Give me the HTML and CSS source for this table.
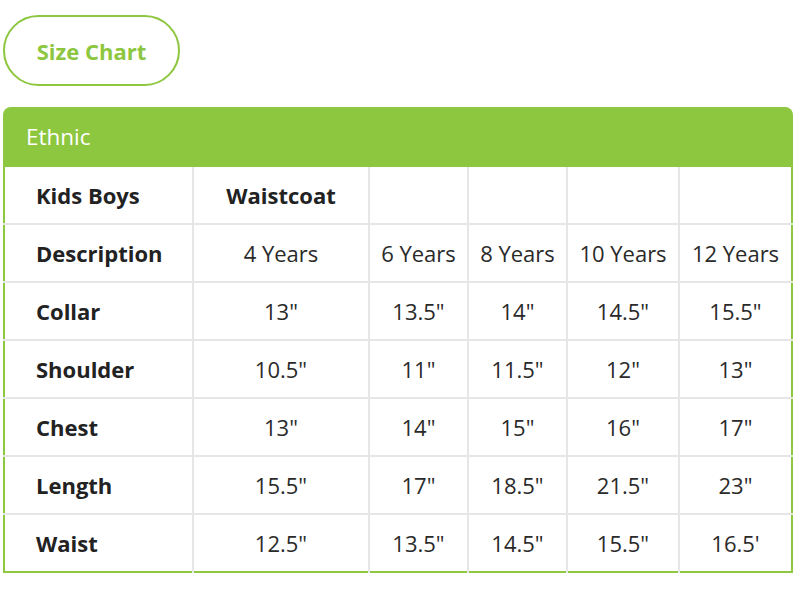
FILE: index.html
```html
<!DOCTYPE html>
<html>
<head>
<meta charset="utf-8">
<link rel="stylesheet" href="styles.css">
</head>
<body>
<button class="size-btn">Size Chart</button>
<div class="chart">
  <div class="chart-head">Ethnic</div>
  <table class="grid">
    <colgroup>
      <col class="c1"><col class="c2"><col class="c3"><col class="c4"><col class="c5"><col class="c6">
    </colgroup>
    <tr><th>Kids Boys</th><th class="ctr">Waistcoat</th><td></td><td></td><td></td><td></td></tr>
    <tr><th>Description</th><td>4 Years</td><td>6 Years</td><td>8 Years</td><td>10 Years</td><td>12 Years</td></tr>
    <tr><th>Collar</th><td>13"</td><td>13.5"</td><td>14"</td><td>14.5"</td><td>15.5"</td></tr>
    <tr><th>Shoulder</th><td>10.5"</td><td>11"</td><td>11.5"</td><td>12"</td><td>13"</td></tr>
    <tr><th>Chest</th><td>13"</td><td>14"</td><td>15"</td><td>16"</td><td>17"</td></tr>
    <tr><th>Length</th><td>15.5"</td><td>17"</td><td>18.5"</td><td>21.5"</td><td>23"</td></tr>
    <tr><th>Waist</th><td>12.5"</td><td>13.5"</td><td>14.5"</td><td>15.5"</td><td>16.5'</td></tr>
  </table>
</div>
</body>
</html>
```
FILE: styles.css
```css
body {
  margin: 0;
  background: #fff;
  font-family: "Open Sans", "Noto Sans", sans-serif;
  color: #222;
}
.size-btn {
  display: block;
  margin: 15px 0 0 3px;
  width: 177px;
  height: 71px;
  border: 2px solid #8dc63f;
  border-radius: 36px;
  background: #fff;
  color: #8dc63f;
  font-family: "Open Sans", sans-serif;
  font-weight: 700;
  font-size: 22px;
  padding: 0;
}
.chart {
  margin: 21px 0 0 3px;
  width: 790px;
}
.chart-head {
  height: 60px;
  background: #8dc63f;
  border-radius: 8px 8px 0 0;
  color: #fff;
  font-size: 22.5px;
  line-height: 60px;
  padding-left: 23px;
}
.grid {
  width: 790px;
  table-layout: fixed;
  border-collapse: collapse;
  border: 2px solid #8dc63f;
  border-top: none;
}
.c1 { width: 189px; }
.c2 { width: 176px; }
.c3 { width: 99px; }
.c4 { width: 99px; }
.c5 { width: 112px; }
.c6 { width: 113px; }
.grid th, .grid td {
  height: 56px;
  padding: 0;
  font-size: 22px;
  text-align: center;
  border-left: 2px solid #e6e6e6;
  border-top: 2px solid #e6e6e6;
}
.grid td { font-size: 22px; color: #2a2a2a; }
.grid tr:first-child th, .grid tr:first-child td { border-top: none; }
.grid th { font-weight: 700; text-align: left; padding-left: 31px; border-left: none; }
.grid th.ctr { text-align: center; padding-left: 0; border-left: 2px solid #e6e6e6; }
```
